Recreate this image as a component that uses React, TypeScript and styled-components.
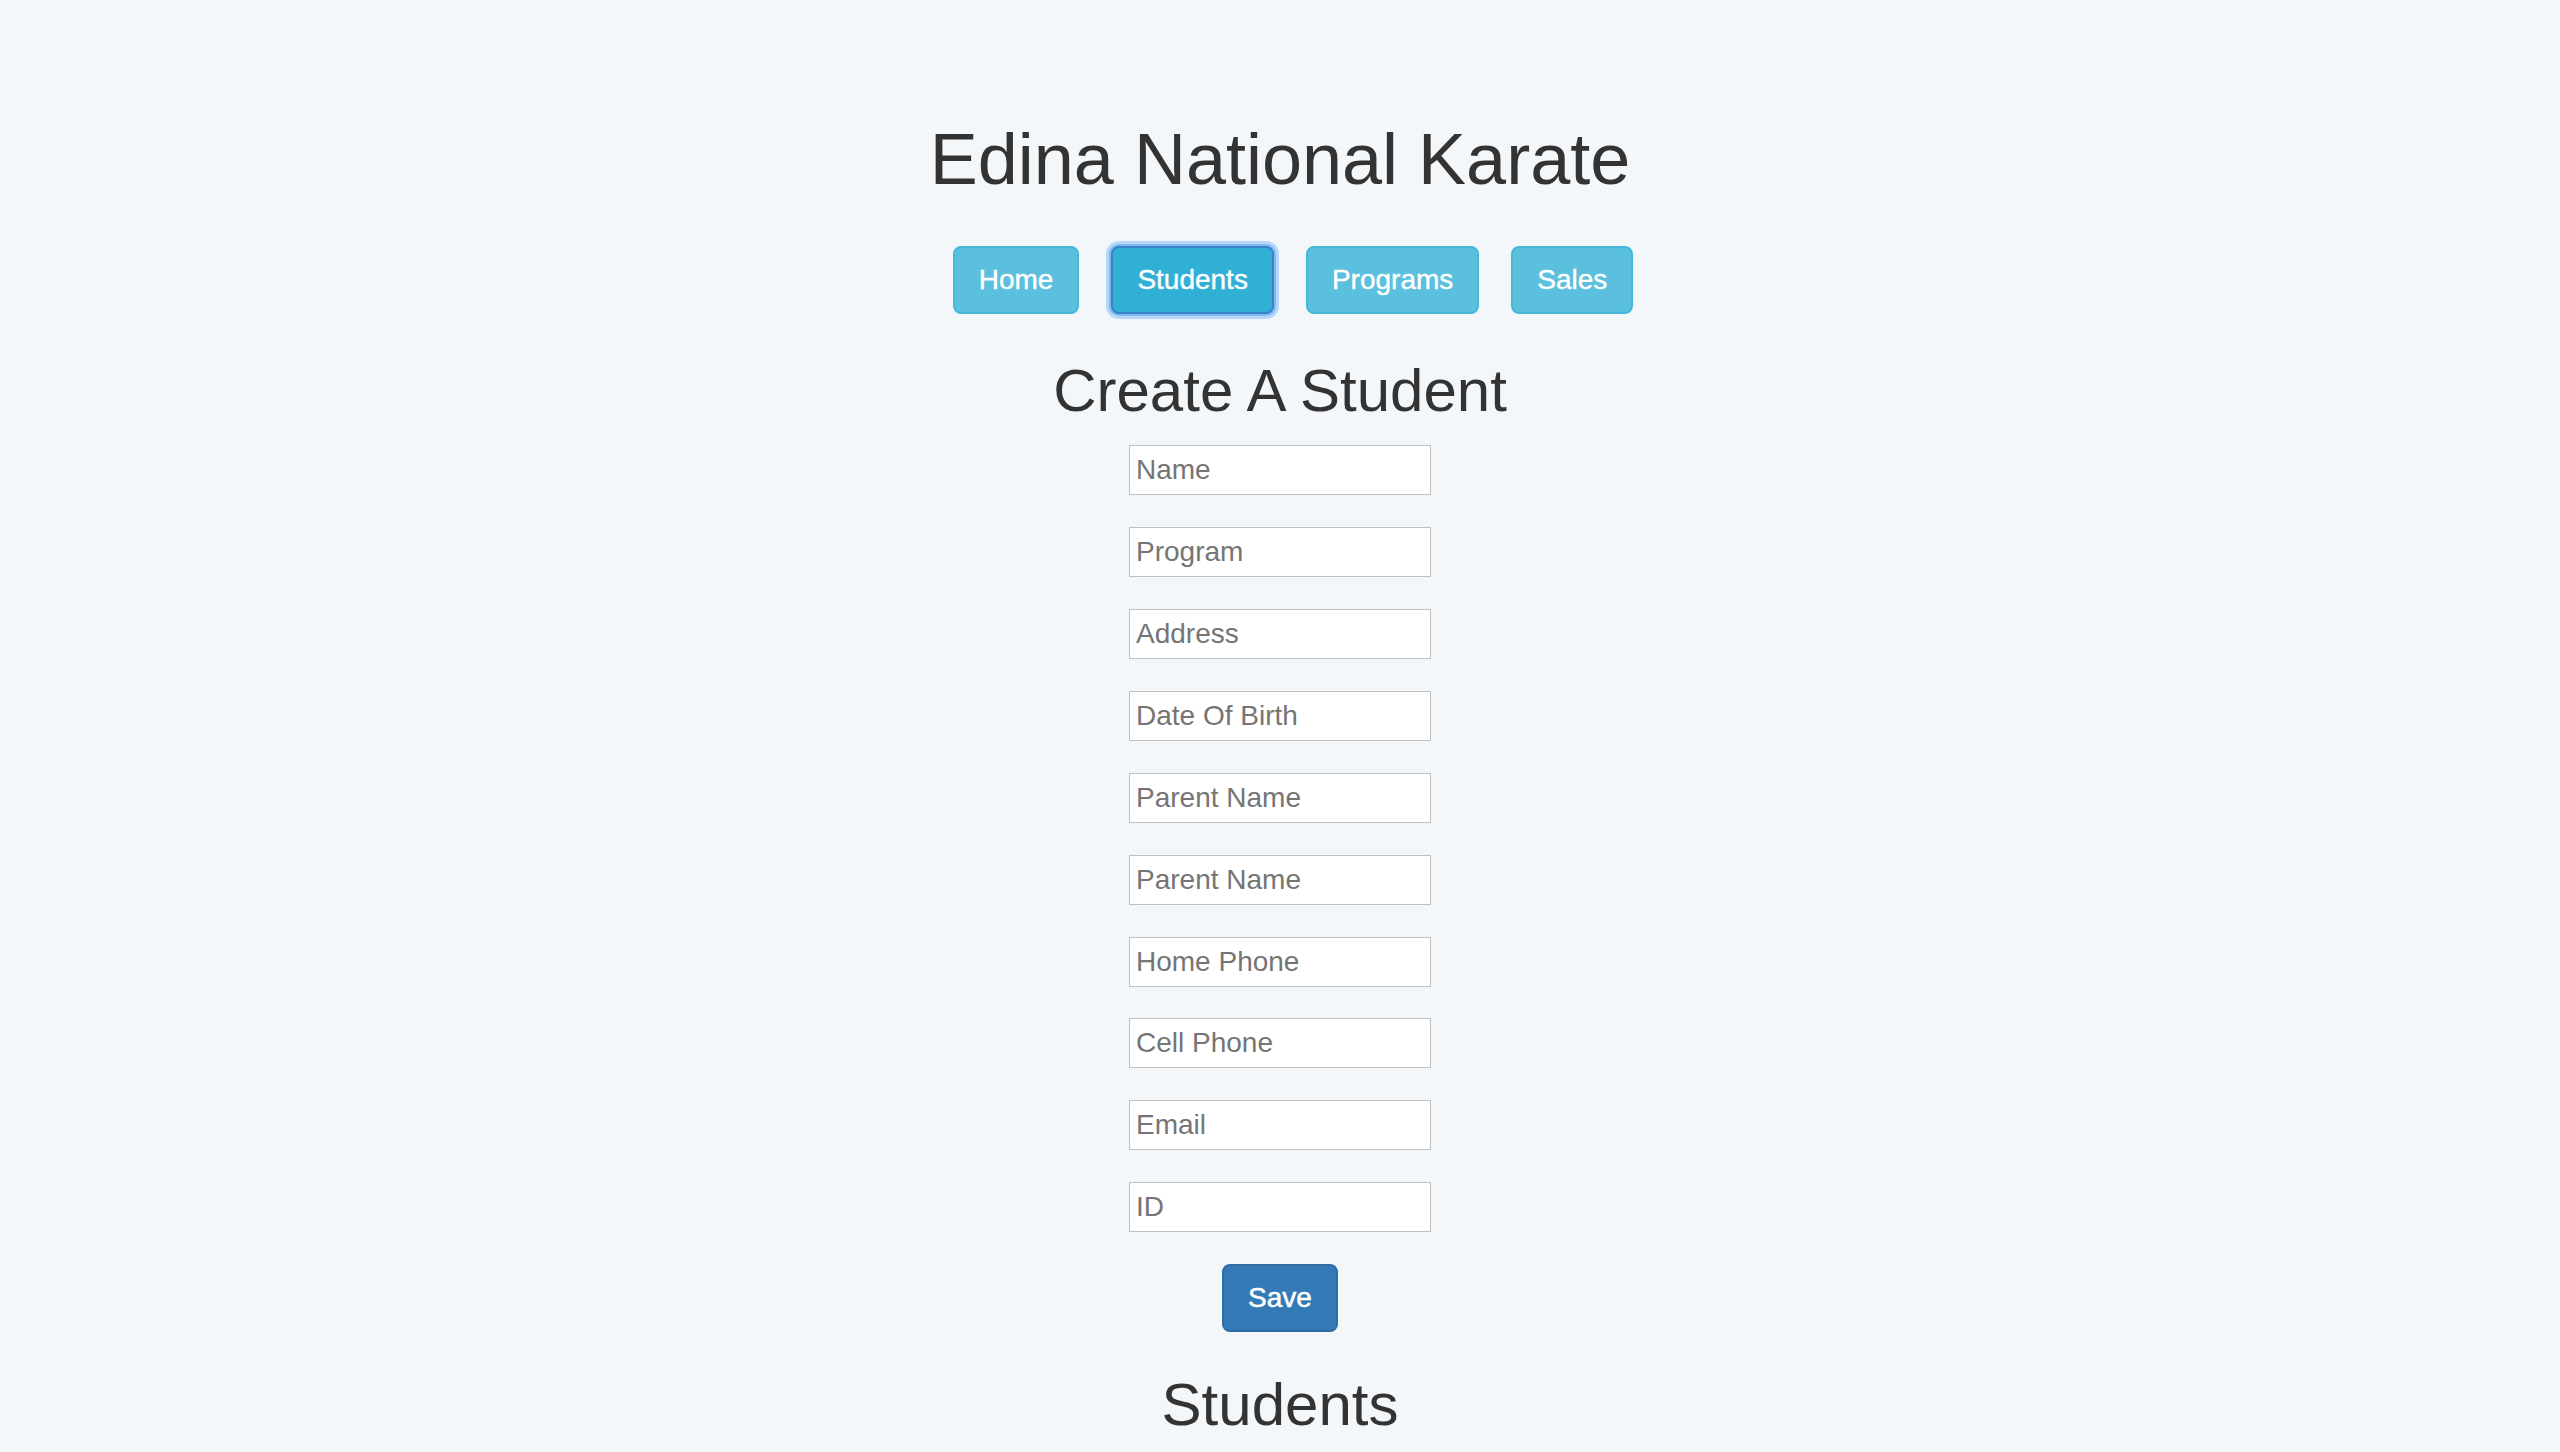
import React from "react";
import styled, { createGlobalStyle } from "styled-components";

const GlobalStyle = createGlobalStyle`
  html, body {
    margin: 0;
    padding: 0;
    background: #f4f7fa;
  }
  body {
    font-family: "Liberation Sans", Arial, Helvetica, sans-serif;
    font-size: 28px;
    line-height: 40px;
    color: #333333;
  }
  * { box-sizing: border-box; }
`;

const Page = styled.div`
  display: flex;
  flex-direction: column;
  align-items: center;
  padding-top: 80px;
  padding-bottom: 80px;
  min-height: 1452px;
`;

const Title = styled.h1`
  margin: 40px 0 20px;
  font-size: 72px;
  line-height: 79.2px;
  font-weight: 400;
  color: #333333;
`;

const Nav = styled.nav`
  display: flex;
  gap: 32px;
  margin-top: 27px;
  padding-left: 26px;
`;

const NavButton = styled.button<{ $active?: boolean }>`
  font-family: "Liberation Sans", Arial, Helvetica, sans-serif;
  font-size: 28px;
  line-height: 40px;
  font-weight: 400;
  height: 68px;
  padding: 12px 24px;
  border-radius: 8px;
  color: #ffffff;
  -webkit-text-stroke: 0.4px #ffffff;
  cursor: pointer;
  border: 2px solid ${(p) => (p.$active ? "#3a82c6" : "#46b8da")};
  background: ${(p) => (p.$active ? "#31b0d5" : "#5bc0de")};
  box-shadow: ${(p) =>
    p.$active
      ? "0 0 0 2px #7fb8f0, 0 0 0 5px rgba(150, 198, 250, 0.65)"
      : "none"};
  outline: none;
`;

const SectionTitle = styled.h2<{ $top: number; $bottom: number }>`
  margin: ${(p) => p.$top}px 0 ${(p) => p.$bottom}px;
  font-size: 60px;
  line-height: 66px;
  font-weight: 400;
  color: #333333;
`;

const Form = styled.form`
  display: flex;
  flex-direction: column;
  align-items: center;
  gap: 31.9px;
`;

const Field = styled.input`
  width: 302px;
  height: 50px;
  padding: 4px 6px;
  border: 1px solid #bfbfbf;
  border-radius: 0;
  background: #ffffff;
  font-family: "Liberation Sans", Arial, Helvetica, sans-serif;
  font-size: 28px;
  line-height: 40px;
  color: #333333;
  outline: none;

  &::placeholder {
    color: #757575;
    opacity: 1;
  }
`;

const SaveButton = styled.button`
  font-family: "Liberation Sans", Arial, Helvetica, sans-serif;
  font-size: 28px;
  line-height: 40px;
  font-weight: 400;
  height: 68px;
  padding: 12px 24px;
  border-radius: 8px;
  border: 2px solid #2e6da4;
  background: #337ab7;
  color: #ffffff;
  -webkit-text-stroke: 0.5px #ffffff;
  cursor: pointer;
`;

const fields = [
  "Name",
  "Program",
  "Address",
  "Date Of Birth",
  "Parent Name",
  "Parent Name",
  "Home Phone",
  "Cell Phone",
  "Email",
  "ID",
];

export default function App() {
  return (
    <>
      <GlobalStyle />
      <Page>
        <Title>Edina National Karate</Title>
        <Nav>
          <NavButton>Home</NavButton>
          <NavButton $active>Students</NavButton>
          <NavButton>Programs</NavButton>
          <NavButton>Sales</NavButton>
        </Nav>
        <SectionTitle $top={44} $bottom={21}>
          Create A Student
        </SectionTitle>
        <Form onSubmit={(e) => e.preventDefault()}>
          {fields.map((f, i) => (
            <Field key={i} type="text" placeholder={f} />
          ))}
          <SaveButton type="submit">Save</SaveButton>
        </Form>
        <SectionTitle $top={40} $bottom={20}>
          Students
        </SectionTitle>
      </Page>
    </>
  );
}
